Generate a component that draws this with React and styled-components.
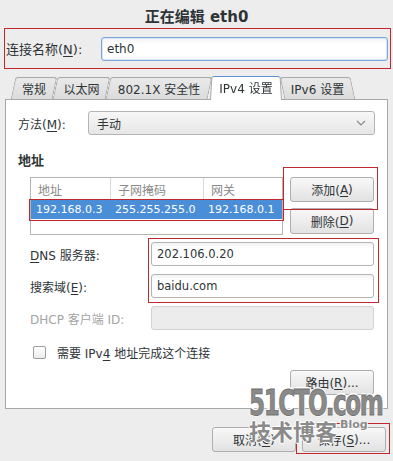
import React from "react";
import styled, { createGlobalStyle, css } from "styled-components";

const GlobalStyle = createGlobalStyle`
  html, body {
    margin: 0;
    padding: 0;
    background: #ededed;
  }
  body {
    font-family: "DejaVu Sans", "Noto Sans CJK SC", sans-serif;
    font-size: 12px;
    color: #2e3436;
  }
  u {
    text-decoration: underline;
    text-underline-offset: 2px;
  }
`;

const Dialog = styled.div`
  position: relative;
  width: 393px;
  height: 461px;
  background: #ededed;
  border-radius: 4px 4px 0 0;
  overflow: hidden;
  display: flex;
  flex-direction: column;
`;

const TitleBar = styled.div`
  height: 28px;
  display: flex;
  align-items: center;
  justify-content: center;
  font-size: 15px;
  font-weight: bold;
  color: #2e3436;
  padding-top: 2px;
  box-sizing: border-box;
`;

const NameRow = styled.div`
  margin: 0 2px 0 4px;
  height: 41px;
  box-sizing: border-box;
  border: 1px solid #c1272d;
  display: flex;
  align-items: center;
  padding: 0 2px 0 1px;
`;

const NameLabel = styled.label`
  width: 95px;
  font-size: 13px;
`;

const TextInput = styled.div`
  flex: 1;
  height: 24px;
  box-sizing: border-box;
  border: 1px solid ${(p) => (p.$focus ? "#7fa6d8" : p.$disabled ? "#d2d2d2" : "#b4b4b4")};
  border-radius: 3px;
  background: ${(p) =>
    p.$disabled ? "#ececec" : "linear-gradient(#f2f2f2, #ffffff 6px)"};
  box-shadow: ${(p) => (p.$focus ? "inset 0 0 0 1px #d6e4f5" : "none")};
  display: flex;
  align-items: center;
  padding-left: 5px;
  font-size: ${(p) => (p.$focus ? 12 : 11.5)}px;
  color: #2e3436;
`;

const TabStrip = styled.div`
  margin-top: 5px;
  height: 25px;
  display: flex;
  align-items: flex-end;
  padding-left: 13px;
  position: relative;
  z-index: 2;
`;

const Tab = styled.div`
  position: relative;
  width: ${(p) => p.$w}px;
  height: ${(p) => (p.$kind === "active" ? 25 : 22)}px;
  display: flex;
  align-items: center;
  justify-content: center;
  font-size: 12px;
  color: #2e3436;
  z-index: ${(p) => (p.$kind === "active" ? 3 : 1)};
  margin-bottom: ${(p) => (p.$kind === "active" ? -1 : 0)}px;

  &::before {
    content: "";
    position: absolute;
    inset: 0;
    box-sizing: border-box;
    border: 1px solid #a8a8a8;
    border-bottom: none;
    border-radius: 3px 3px 0 0;
    z-index: -1;
    ${(p) =>
      p.$kind === "active"
        ? css`
            background: #ffffff;
            border-color: #5b8fd0 #a8a8a8 #a8a8a8;
            border-top: 1px solid #5b8fd0;
            transform-origin: bottom;
            transform: perspective(40px) rotateX(4deg);
          `
        : css`
            background: linear-gradient(#e9e9e9, #dcdcdc);
            transform: skewX(${p.$kind === "before" ? -12 : 12}deg);
          `}
  }
`;

const Panel = styled.div`
  margin: 0 5px 0 5px;
  background: #ffffff;
  border: 1px solid #a8a8a8;
  padding: 11px 12px 13px 12px;
  display: flex;
  flex-direction: column;
  position: relative;
  z-index: 1;
`;

const MethodRow = styled.div`
  display: flex;
  align-items: center;
  height: 24px;
`;

const MethodLabel = styled.label`
  width: 70px;
  font-size: 12px;
`;

const Combo = styled.div`
  flex: 1;
  height: 24px;
  box-sizing: border-box;
  border: 1px solid #b4b4b4;
  border-radius: 3px;
  background: linear-gradient(#f7f7f7, #e6e6e6);
  display: flex;
  align-items: center;
  justify-content: space-between;
  padding: 0 8px 0 8px;
`;

const Heading = styled.div`
  margin-top: 18px;
  line-height: 16px;
  font-weight: bold;
  font-size: 13px;
`;

const AddressSection = styled.div`
  margin: 8px 0 0 12px;
  display: flex;
  gap: 7px;
`;

const Table = styled.div`
  width: 253px;
  height: 58px;
  box-sizing: border-box;
  border: 1px solid #b4b4b4;
  background: #ffffff;
`;

const TableRow = styled.div`
  display: grid;
  grid-template-columns: 79px 93px 1fr;
  height: ${(p) => (p.$head ? 22 : 19)}px;
  align-items: center;
  font-size: ${(p) => (p.$head ? 12 : 11)}px;
  background: ${(p) => (p.$selected ? "#4a8ed8" : "transparent")};
  color: ${(p) => (p.$head ? "#8a8a8a" : p.$selected ? "#ffffff" : "#2e3436")};
`;

const Cell = styled.div`
  height: 100%;
  display: flex;
  align-items: center;
  padding-left: ${(p) => (p.$head ? 7 : 5)}px;
  border-left: ${(p) => (p.$sep ? "1px solid #dadada" : "none")};
  box-sizing: border-box;
  white-space: nowrap;
`;

const ButtonColumn = styled.div`
  width: 84px;
  display: flex;
  flex-direction: column;
  gap: 6px;
`;

const Button = styled.div`
  width: 84px;
  height: ${(p) => p.$h || 25}px;
  box-sizing: border-box;
  border: 1px solid #aeaeae;
  border-radius: 3px;
  background: linear-gradient(#f8f8f8, #e2e2e2);
  display: flex;
  align-items: center;
  justify-content: center;
  font-size: 12px;
  color: #2e3436;
`;

const FormGrid = styled.div`
  margin: 7px 0 0 12px;
  display: grid;
  grid-template-columns: 121px 223px;
  grid-auto-rows: 24px;
  row-gap: 8px;
  align-items: center;
`;

const FieldLabel = styled.label`
  font-size: 12px;
  color: ${(p) => (p.$disabled ? "#a4a4a4" : "#2e3436")};
`;

const CheckRow = styled.div`
  margin: 16px 0 0 15px;
  height: 12px;
  display: flex;
  align-items: center;
  gap: 11px;
`;

const CheckBox = styled.div`
  width: 11px;
  height: 11px;
  border: 1px solid #9c9c9c;
  border-radius: 2px;
  background: linear-gradient(#ffffff, #ececec);
`;

const RouteRow = styled.div`
  margin-top: 12px;
  display: flex;
  justify-content: flex-end;
  padding-right: 1px;
`;

const Footer = styled.div`
  margin-top: 18px;
  display: flex;
  justify-content: flex-end;
  gap: 6px;
  padding-right: 7px;
`;

const Mark = styled.div`
  position: absolute;
  left: ${(p) => p.$x}px;
  top: ${(p) => p.$y}px;
  width: ${(p) => p.$w}px;
  height: ${(p) => p.$h}px;
  box-sizing: border-box;
  border: 1px solid #c1272d;
  pointer-events: none;
  z-index: 5;
`;

const Watermark = styled.div`
  position: absolute;
  left: 249px;
  top: 388px;
  width: 130px;
  z-index: 6;
  pointer-events: none;
  color: #8a8a8a;
`;

const WatermarkSite = styled.div`
  font-family: "DejaVu Sans Condensed", "DejaVu Sans", sans-serif;
  font-weight: bold;
  font-size: 27px;
  line-height: 30px;
  letter-spacing: -1.5px;
  transform: scaleX(0.95) scaleY(1.3);
  transform-origin: left center;
  text-shadow: 0 0 1px #fff, 1px 0 0 #fff, -1px 0 0 #fff, 0 1px 0 #fff, 0 -1px 0 #fff;
  -webkit-text-stroke: 0.6px #6f6f6f;
`;

const WatermarkLine = styled.div`
  display: flex;
  align-items: flex-start;
  margin-top: -1px;
`;

const WatermarkCn = styled.span`
  font-family: "Noto Sans CJK SC", sans-serif;
  font-weight: bold;
  font-size: 22px;
  line-height: 26px;
  text-shadow: 1px 0 0 #fff, -1px 0 0 #fff, 0 1px 0 #fff, 0 -1px 0 #fff;
`;

const WatermarkBlog = styled.span`
  font-family: "DejaVu Sans", sans-serif;
  font-weight: bold;
  font-size: 11px;
  line-height: 12px;
  margin: 2px 0 0 3px;
  text-shadow: 1px 0 0 #fff, -1px 0 0 #fff, 0 1px 0 #fff;
`;

const Chevron = () => (
  <svg width="10" height="6" viewBox="0 0 10 6">
    <path d="M1 1 L5 5 L9 1" fill="none" stroke="#8a8a8a" strokeWidth="1.2" />
  </svg>
);

const tabs = [
  { label: "常规", w: 42, kind: "before" },
  { label: "以太网", w: 53, kind: "before" },
  { label: "802.1X 安全性", w: 102, kind: "before" },
  { label: "IPv4 设置", w: 72, kind: "active" },
  { label: "IPv6 设置", w: 71, kind: "after" },
];

export default function App() {
  return (
    <>
      <GlobalStyle />
      <Dialog>
        <TitleBar>正在编辑 eth0</TitleBar>
        <NameRow>
          <NameLabel>
            连接名称(<u>N</u>):
          </NameLabel>
          <TextInput $focus>eth0</TextInput>
        </NameRow>

        <TabStrip>
          {tabs.map((t) => (
            <Tab key={t.label} $w={t.w} $kind={t.kind}>
              {t.label}
            </Tab>
          ))}
        </TabStrip>

        <Panel>
          <MethodRow>
            <MethodLabel>
              方法(<u>M</u>):
            </MethodLabel>
            <Combo>
              <span>手动</span>
              <Chevron />
            </Combo>
          </MethodRow>

          <Heading>地址</Heading>

          <AddressSection>
            <Table>
              <TableRow $head>
                <Cell $head>地址</Cell>
                <Cell $head $sep>子网掩码</Cell>
                <Cell $head $sep>网关</Cell>
              </TableRow>
              <TableRow $selected>
                <Cell>192.168.0.3</Cell>
                <Cell>255.255.255.0</Cell>
                <Cell>192.168.0.1</Cell>
              </TableRow>
            </Table>
            <ButtonColumn>
              <Button>
                添加(<u>A</u>)
              </Button>
              <Button $h={26}>
                删除(<u>D</u>)
              </Button>
            </ButtonColumn>
          </AddressSection>

          <FormGrid>
            <FieldLabel>
              <u>D</u>NS 服务器:
            </FieldLabel>
            <TextInput>202.106.0.20</TextInput>
            <FieldLabel>
              搜索域(<u>E</u>):
            </FieldLabel>
            <TextInput>baidu.com</TextInput>
            <FieldLabel $disabled>DHCP 客户端 ID:</FieldLabel>
            <TextInput $disabled />
          </FormGrid>

          <CheckRow>
            <CheckBox />
            <span>
              需要 IPv<u>4</u> 地址完成这个连接
            </span>
          </CheckRow>

          <RouteRow>
            <Button>
              路由(<u>R</u>)...
            </Button>
          </RouteRow>
        </Panel>

        <Footer>
          <Button>
            取消(<u>C</u>)
          </Button>
          <Button>
            保存(<u>S</u>)...
          </Button>
        </Footer>

        <Mark $x={29} $y={199} $w={255} $h={22} />
        <Mark $x={283} $y={167} $w={95} $h={43} />
        <Mark $x={148} $y={238} $w={231} $h={65} />
        <Mark $x={296} $y={423} $w={94} $h={31} />

        <Watermark>
          <WatermarkSite>51CTO.com</WatermarkSite>
          <WatermarkLine>
            <WatermarkCn>技术博客</WatermarkCn>
            <WatermarkBlog>Blog</WatermarkBlog>
          </WatermarkLine>
        </Watermark>
      </Dialog>
    </>
  );
}
